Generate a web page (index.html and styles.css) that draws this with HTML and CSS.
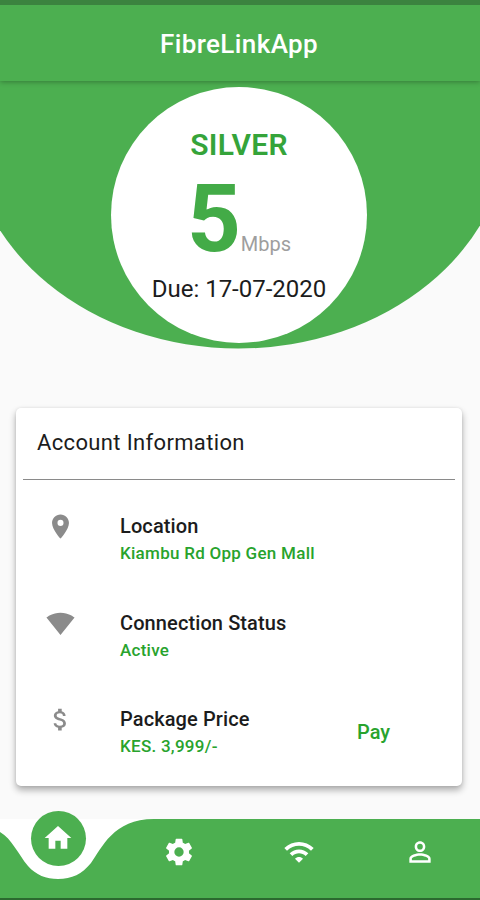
FILE: index.html
```html
<!DOCTYPE html>
<html lang="en">
<head>
    <meta charset="UTF-8">
    <meta name="viewport" content="width=device-width, initial-scale=1.0">
    <title>FibreLinkApp</title>
    <link rel="stylesheet" href="styles.css">
</head>
<body>
    <div class="app">
        <header class="app-bar">
            <h1>FibreLinkApp</h1>
        </header>

        <section class="hero">
            <svg class="hero-bg" viewBox="0 0 480 268">
                <ellipse cx="238.5" cy="45" rx="270" ry="222.5"/>
                <rect width="480" height="45"/>
            </svg>
            <div class="plan">
                <h2 class="plan-name">SILVER</h2>
                <div class="speed">
                    <span class="number">5</span>
                    <span class="unit">Mbps</span>
                </div>
                <p class="due">Due: 17-07-2020</p>
            </div>
        </section>

        <main class="card">
            <h3>Account Information</h3>
            <div class="row">
                <svg class="icon" viewBox="0 0 24 24"><path d="M12 2C8.13 2 5 5.13 5 9c0 5.25 7 13 7 13s7-7.75 7-13c0-3.87-3.13-7-7-7zm0 9.5a2.5 2.5 0 1 1 0-5 2.5 2.5 0 0 1 0 5z"/></svg>
                <div class="info">
                    <h4>Location</h4>
                    <p>Kiambu Rd Opp Gen Mall</p>
                </div>
            </div>
            <div class="row">
                <svg class="icon" viewBox="0 0 24 24"><path d="M12.01 21.49 23.64 7c-.45-.34-4.93-4-11.64-4C5.28 3 .81 6.66.36 7l11.63 14.49.01.01.01-.01z"/></svg>
                <div class="info">
                    <h4>Connection Status</h4>
                    <p>Active</p>
                </div>
            </div>
            <div class="row">
                <svg class="icon" viewBox="0 0 24 24"><path d="M11.8 10.9c-2.27-.59-3-1.2-3-2.15 0-1.09 1.01-1.85 2.7-1.85 1.78 0 2.44.85 2.5 2.1h2.21c-.07-1.72-1.12-3.3-3.21-3.81V3h-3v2.16c-1.94.42-3.5 1.68-3.5 3.61 0 2.31 1.91 3.46 4.7 4.13 2.5.6 3 1.48 3 2.41 0 .69-.49 1.79-2.7 1.79-2.06 0-2.87-.92-2.98-2.1h-2.2c.12 2.19 1.76 3.42 3.68 3.83V21h3v-2.15c1.95-.37 3.5-1.5 3.5-3.55 0-2.84-2.43-3.81-4.7-4.4z"/></svg>
                <div class="info">
                    <h4>Package Price</h4>
                    <p>KES. 3,999/-</p>
                </div>
                <a class="pay">Pay</a>
            </div>
        </main>

        <nav class="bottom-nav">
            <svg class="nav-bg" viewBox="0 0 480 79">
                <path d="M0 13C12 20 18 35 28 47C36 56 46 60 58 60C72 60 82 55 91 44C102 29 113 0 154 0H480V79H0Z"/>
            </svg>
            <a class="nav-item active">
                <svg viewBox="0 0 24 24"><path d="M10 20v-6h4v6h5v-8h3L12 3 2 12h3v8z"/></svg>
            </a>
            <a class="nav-item">
                <svg viewBox="0 0 24 24"><path d="M19.43 12.98c.04-.32.07-.64.07-.98s-.03-.66-.07-.98l2.11-1.65c.19-.15.24-.42.12-.64l-2-3.46c-.12-.22-.39-.3-.61-.22l-2.49 1c-.52-.4-1.08-.73-1.69-.98l-.38-2.65C14.46 2.18 14.25 2 14 2h-4c-.25 0-.46.18-.49.42l-.38 2.65c-.61.25-1.17.59-1.69.98l-2.49-1c-.23-.09-.49 0-.61.22l-2 3.46c-.13.22-.07.49.12.64l2.11 1.65c-.04.32-.07.65-.07.98s.03.66.07.98l-2.11 1.65c-.19.15-.24.42-.12.64l2 3.46c.12.22.39.3.61.22l2.49-1c.52.4 1.08.73 1.69.98l.38 2.65c.03.24.24.42.49.42h4c.25 0 .46-.18.49-.42l.38-2.65c.61-.25 1.17-.59 1.69-.98l2.49 1c.23.09.49 0 .61-.22l2-3.46c.12-.22.07-.49-.12-.64l-2.11-1.65zM12 15.5a3.5 3.5 0 1 1 0-7 3.5 3.5 0 0 1 0 7z"/></svg>
            </a>
            <a class="nav-item">
                <svg viewBox="0 0 24 24"><path d="M1 9l2 2c4.97-4.97 13.03-4.97 18 0l2-2C16.93 2.93 7.08 2.93 1 9zm8 8l3 3 3-3c-1.65-1.66-4.34-1.66-6 0zm-4-4l2 2c2.76-2.76 7.24-2.76 10 0l2-2C15.14 9.14 8.87 9.14 5 13z"/></svg>
            </a>
            <a class="nav-item">
                <svg viewBox="0 0 24 24"><path d="M12 5.9a2.1 2.1 0 1 1 0 4.2 2.1 2.1 0 0 1 0-4.2m0 9c2.97 0 6.1 1.46 6.1 2.1v1.1H5.9V17c0-.64 3.13-2.1 6.1-2.1M12 4C9.79 4 8 5.79 8 8s1.79 4 4 4 4-1.79 4-4-1.79-4-4-4zm0 9c-2.67 0-8 1.34-8 4v3h16v-3c0-2.66-5.33-4-8-4z"/></svg>
            </a>
        </nav>
    </div>
</body>
</html>
```
FILE: styles.css
```css
* {
    margin: 0;
    padding: 0;
    box-sizing: border-box;
}

body {
    font-family: Roboto, 'Liberation Sans', sans-serif;
    color: #1c1c1c;
    background-color: #fafafa;
}

.app {
    display: flex;
    flex-direction: column;
    width: 480px;
    height: 900px;
    overflow: hidden;
    border-top: 5px solid #3b833f;
    border-bottom: 2px solid #2b6a2f;
}

.app-bar {
    position: relative;
    z-index: 1;
    flex: none;
    height: 76px;
    background: #4caf50;
    color: white;
    text-align: center;
    box-shadow: 0 1px 5px rgba(0, 0, 0, 0.3);
}

.app-bar h1 {
    font-size: 26px;
    font-weight: 500;
    letter-spacing: 0.4px;
    line-height: 78px;
    padding-right: 2px;
}

.hero {
    position: relative;
    flex: none;
    height: 268px;
    padding: 6px 0 0 111px;
}

.hero-bg {
    position: absolute;
    top: 0;
    left: 0;
    width: 480px;
    height: 268px;
    fill: #4caf50;
}

.plan {
    position: relative;
    width: 256px;
    height: 256px;
    padding-top: 40px;
    border-radius: 50%;
    background: white;
    text-align: center;
}

.plan-name {
    color: #35a43a;
    font-size: 30px;
    font-weight: 600;
    letter-spacing: 0.3px;
    line-height: 36px;
}

.speed {
    display: flex;
    align-items: baseline;
    justify-content: center;
    height: 111px;
    padding-left: 0;
}

.speed .number {
    color: #43ab47;
    font-size: 94px;
    font-weight: 700;
    line-height: 112px;
}

.speed .unit {
    color: #9e9e9e;
    font-size: 20px;
}

.due {
    font-size: 24px;
    line-height: 30px;
}

.card {
    flex: none;
    height: 378px;
    margin: 59px 18px 0 16px;
    padding: 0 7px;
    border-radius: 5px;
    background: white;
    box-shadow: 0 4px 7px rgba(0, 0, 0, 0.32), 0 0 3px rgba(0, 0, 0, 0.08);
}

.card h3 {
    height: 72px;
    margin-bottom: 26px;
    padding-left: 14px;
    border-bottom: 1px solid #8a8a8a;
    font-size: 22px;
    font-weight: 400;
    letter-spacing: 0.35px;
    line-height: 69px;
}

.row {
    display: flex;
    height: 96.5px;
}

.icon {
    width: 29px;
    height: 29px;
    margin: 6px 45.5px 0 22.5px;
    fill: #8b8b8b;
}

.info {
    width: 237px;
}

.info h4 {
    font-size: 20px;
    font-weight: 500;
    letter-spacing: 0.1px;
    line-height: 41px;
}

.info p,
.pay {
    color: #28a32d;
    font-weight: 500;
}

.info p {
    font-size: 17px;
    letter-spacing: 0.27px;
    line-height: 13px;
}

.pay {
    font-size: 20px;
    line-height: 66px;
}

.bottom-nav {
    position: relative;
    display: flex;
    flex: none;
    height: 79px;
    margin-top: 33px;
    background: white;
}

.nav-bg {
    position: absolute;
    top: 0;
    left: 0;
    width: 480px;
    height: 79px;
    fill: #4caf50;
}

.nav-item {
    position: relative;
    flex: 1;
    height: 66px;
    display: flex;
    align-items: center;
    justify-content: center;
}

.nav-item svg {
    width: 32px;
    height: 32px;
    fill: white;
}

/* raised button sitting in the notch */
.nav-item.active {
    flex: none;
    width: 55px;
    height: 55px;
    margin: -8.5px 33.5px 0 30.5px;
    border-radius: 50%;
    background: #4caf50;
}
```
